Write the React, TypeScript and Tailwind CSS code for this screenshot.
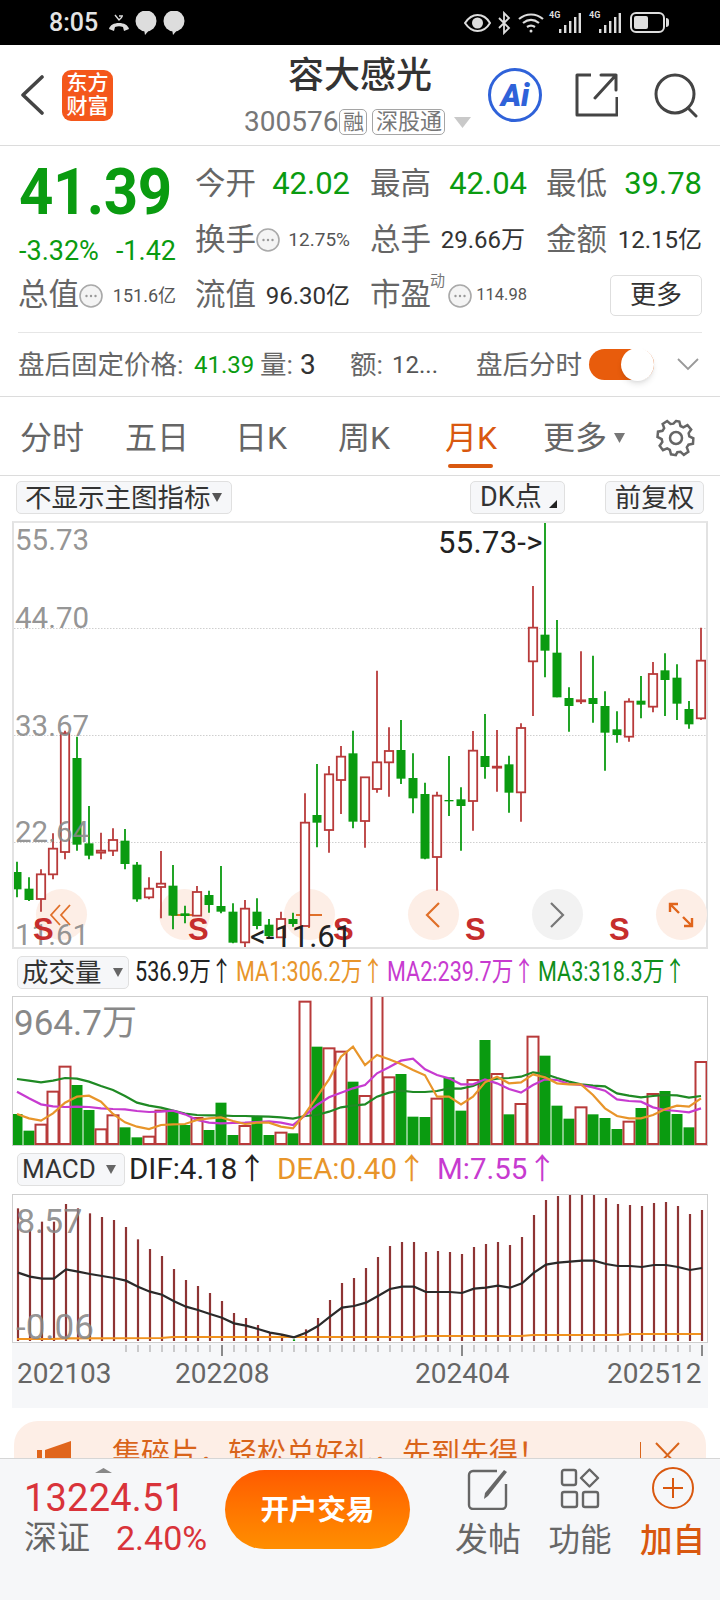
import React from 'react';

const GREEN = '#0a9b10';
const RED = '#b83a3a';

// candle data, y values measured at 3x from chart top edge (y = 520 + v / 3)
const candles: [number, number, number, number, 'r' | 'g'][] = [
  [1025, 1056, 1108, 1132, 'g'], [1072, 1106, 1140, 1143, 'g'], [1048, 1063, 1137, 1175, 'r'], [940, 986, 1063, 1078, 'r'],
  [632, 640, 996, 1018, 'r'], [650, 714, 974, 992, 'g'], [858, 970, 1007, 1018, 'g'], [938, 992, 998, 1018, 'r'],
  [925, 960, 992, 1008, 'r'], [927, 962, 1032, 1048, 'g'], [1026, 1034, 1138, 1145, 'g'], [1072, 1106, 1132, 1138, 'r'],
  [993, 1091, 1101, 1195, 'r'], [1035, 1097, 1187, 1228, 'g'], [1157, 1180, 1188, 1210, 'g'], [1098, 1116, 1187, 1187, 'r'],
  [1112, 1125, 1155, 1178, 'g'], [1038, 1158, 1175, 1180, 'g'], [1150, 1175, 1268, 1270, 'g'], [1140, 1166, 1267, 1285, 'r'],
  [1135, 1175, 1218, 1228, 'g'], [1197, 1214, 1248, 1255, 'g'], [1175, 1197, 1252, 1252, 'r'], [1178, 1197, 1212, 1220, 'g'],
  [820, 908, 1218, 1218, 'r'], [732, 885, 908, 982, 'g'], [738, 763, 930, 998, 'r'], [678, 710, 780, 882, 'r'],
  [632, 700, 905, 925, 'g'], [772, 772, 903, 983, 'r'], [452, 727, 807, 818, 'r'], [622, 693, 727, 830, 'r'],
  [600, 690, 776, 792, 'g'], [700, 774, 835, 880, 'g'], [788, 822, 1016, 1018, 'g'], [815, 827, 1011, 1112, 'r'],
  [708, 840, 844, 888, 'g'], [802, 838, 858, 992, 'g'], [633, 692, 843, 932, 'r'], [582, 708, 741, 776, 'g'],
  [630, 740, 742, 815, 'r'], [707, 733, 818, 878, 'g'], [610, 624, 817, 905, 'r'], [198, 323, 424, 588, 'r'],
  [5, 344, 392, 472, 'g'], [300, 398, 532, 532, 'g'], [502, 534, 558, 635, 'g'], [394, 541, 543, 552, 'r'],
  [407, 534, 552, 608, 'g'], [514, 558, 638, 752, 'g'], [574, 628, 645, 668, 'g'], [535, 545, 650, 665, 'r'],
  [468, 542, 554, 595, 'g'], [426, 462, 560, 577, 'r'], [400, 451, 480, 588, 'g'], [433, 473, 551, 600, 'g'],
  [543, 567, 613, 626, 'g'], [323, 422, 595, 600, 'r'],
];

// volume bars and moving averages (y = 990 + v / 3)
const volumes: [number, 'r' | 'g'][] = [
  [372, 'g'], [422, 'g'], [404, 'r'], [305, 'r'], [230, 'r'], [285, 'g'], [360, 'g'], [418, 'r'], [376, 'r'], [412, 'g'],
  [442, 'g'], [440, 'r'], [362, 'r'], [365, 'g'], [405, 'g'], [384, 'r'], [420, 'g'], [338, 'g'], [435, 'g'], [408, 'r'],
  [378, 'g'], [435, 'g'], [428, 'r'], [430, 'g'], [35, 'r'], [170, 'g'], [175, 'r'], [185, 'r'], [275, 'g'], [318, 'r'],
  [10, 'r'], [262, 'r'], [252, 'g'], [380, 'g'], [381, 'g'], [326, 'r'], [262, 'g'], [362, 'g'], [270, 'r'], [150, 'g'],
  [252, 'r'], [373, 'g'], [342, 'r'], [140, 'r'], [197, 'g'], [347, 'g'], [386, 'g'], [352, 'r'], [373, 'g'], [384, 'g'],
  [417, 'g'], [395, 'r'], [354, 'g'], [312, 'r'], [303, 'g'], [372, 'g'], [412, 'g'], [216, 'r'],
];
const ma1 = [372, 385, 392, 370, 338, 320, 317, 335, 372, 397, 410, 417, 405, 403, 402, 390, 385, 382, 393, 402, 398, 398, 410, 415, 372, 320, 268, 200, 170, 225, 195, 208, 222, 240, 256, 320, 320, 343, 320, 277, 260, 280, 277, 253, 262, 280, 283, 283, 315, 355, 378, 385, 385, 375, 358, 347, 350, 325];
const ma2 = [305, 325, 343, 349, 351, 350, 351, 355, 357, 358, 363, 366, 365, 362, 373, 390, 398, 400, 399, 398, 396, 394, 398, 405, 376, 345, 322, 308, 295, 285, 250, 232, 212, 206, 238, 255, 265, 283, 283, 268, 280, 297, 308, 285, 268, 270, 282, 285, 292, 302, 328, 333, 335, 352, 360, 363, 367, 355];
const ma3 = [267, 272, 277, 272, 264, 266, 275, 288, 300, 318, 338, 347, 353, 362, 371, 375, 376, 376, 378, 378, 379, 380, 382, 386, 378, 375, 365, 352, 347, 343, 320, 308, 302, 306, 306, 303, 295, 296, 288, 272, 266, 264, 260, 247, 252, 264, 275, 283, 287, 289, 310, 317, 322, 318, 315, 316, 323, 318];

// macd (y = 1180 + v / 3)
const hist = [85, 148, 125, 125, 72, 85, 100, 111, 120, 141, 178, 207, 228, 267, 300, 318, 339, 363, 399, 414, 435, 458, 465, 478, 448, 414, 360, 309, 294, 264, 231, 198, 186, 186, 216, 213, 216, 222, 201, 192, 186, 195, 171, 105, 60, 48, 42, 40, 40, 54, 72, 75, 78, 69, 66, 78, 102, 90];
const dif = [278, 290, 296, 296, 268, 275, 282, 288, 294, 302, 320, 335, 344, 364, 380, 390, 402, 413, 430, 437, 447, 458, 464, 472, 458, 438, 410, 383, 378, 368, 348, 327, 320, 320, 336, 336, 336, 339, 326, 323, 317, 323, 310, 278, 254, 248, 245, 242, 242, 252, 258, 258, 261, 255, 255, 261, 270, 264];
const dea: [number, number][] = [[0, 477], [3, 477], [4, 475], [12, 474], [13, 471], [33, 471], [34, 468], [42, 468], [43, 465], [50, 465], [51, 462], [57, 462]];

const cx = (i: number) => 17 + 12 * i;
const pts = (vals: number[], base: number, dx = 0) => vals.map((v, i) => `${cx(i) + dx},${base + v / 3}`).join(' ');

const Dots = () => (
  <svg width="24" height="24" viewBox="0 0 24 24" className="shrink-0">
    <circle cx="12" cy="12" r="11" fill="#f4f4f4" stroke="#a9a9a9" strokeWidth="1.600" />
    <circle cx="7.500" cy="12" r="1.200" fill="#999" />
    <circle cx="12" cy="12" r="1.200" fill="#999" />
    <circle cx="16.500" cy="12" r="1.200" fill="#999" />
  </svg>
);

const Signal = () => (
  <div className="relative w-[32px] h-[21px]">
    <span className="absolute left-0 top-[-2px] text-[9px] leading-[10px] font-bold text-[#ddd]">4G</span>
    <svg width="32" height="21" viewBox="0 0 32 21" fill="#ddd">
      <rect x="10" y="17" width="2.400" height="4" />
      <rect x="15" y="13" width="2.400" height="8" />
      <rect x="20" y="9" width="2.400" height="12" />
      <rect x="25" y="5" width="2.400" height="16" />
      <rect x="29.600" y="1" width="2.400" height="20" />
    </svg>
  </div>
);

const StatusBar = () => (
  <div className="h-[45px] bg-black flex items-center pl-[49px] text-[#e4e4e4]">
    <span className="text-[25px] font-medium leading-none w-[55px]">8:05</span>
    <svg width="24" height="20" viewBox="0 0 24 20" fill="none" stroke="#ddd" strokeWidth="2" className="ml-[3px]">
      <path d="M2 16c1-4 5-6 10-6s9 2 10 6l-5 2-1-4c-3-1-5-1-8 0l-1 4z" fill="#ddd" stroke="none" />
      <path d="M8 2l4 5 3-3M12 3h4" strokeWidth="1.400" />
    </svg>
    <svg width="22" height="24" viewBox="0 0 22 24" fill="#ddd" className="ml-[4px]">
      <circle cx="11" cy="10" r="10.500" />
      <path d="M9 18l1 6 6-7z" />
    </svg>
    <svg width="22" height="24" viewBox="0 0 22 24" fill="#ddd" className="ml-[6px]">
      <circle cx="11" cy="10" r="10.500" />
      <path d="M9 18l1 6 6-7z" />
    </svg>
    <svg width="27" height="20" viewBox="0 0 27 20" fill="none" stroke="#ddd" strokeWidth="2" className="ml-[279px]">
      <path d="M1 10c4-6 8-8 12.500-8s9 2 12.500 8c-3.500 6-8 8-12.500 8s-8.500-2-12.500-8z" />
      <circle cx="13.500" cy="10" r="4.500" fill="#ddd" />
    </svg>
    <svg width="14" height="24" viewBox="0 0 14 24" fill="none" stroke="#ddd" strokeWidth="1.800" className="ml-[6px]">
      <path d="M2 7l10 10-5 5V2l5 5L2 17" />
    </svg>
    <svg width="26" height="21" viewBox="0 0 26 21" fill="none" stroke="#ddd" strokeWidth="2.200" className="ml-[7px]">
      <path d="M1 7c7-6 17-6 24 0M5 11c5-4 11-4 16 0M9 15c3-2 5-2 8 0" />
      <circle cx="13" cy="19" r="1.500" fill="#ddd" stroke="none" />
    </svg>
    <div className="ml-[5px]"><Signal /></div>
    <div className="ml-[8px]"><Signal /></div>
    <div className="ml-[9px] w-[35px] h-[21px] rounded-[6px] border-2 border-[#ddd] p-[2px] relative">
      <div className="w-[14px] h-full rounded-[2px] bg-[#ddd]" />
      <div className="absolute right-[-6px] top-[4px] w-[3px] h-[9px] rounded-r bg-[#ddd]" />
    </div>
  </div>
);

const Header = () => (
  <div className="h-[101px] border-b border-[#dcdcdc] flex items-center pl-[20px]">
    <svg width="24" height="40" viewBox="0 0 24 40" fill="none" stroke="#444" strokeWidth="3.600" strokeLinecap="round" strokeLinejoin="round">
      <path d="M22 2L3 20l19 18" />
    </svg>
    <div className="ml-[18px] w-[51px] h-[51px] rounded-[9px] bg-[#f4571b] text-white text-[21px] font-medium leading-[23px] text-center pt-[2px]">
      <div>东方</div>
      <div>财富</div>
    </div>
    <div className="ml-[127px] w-[240px] flex flex-col items-center">
      <div className="text-[36px] leading-[46px] font-medium text-[#333] mt-[-1px] mb-[6px]">容大感光</div>
      <div className="flex items-center mt-[3px] text-[#777] w-full pl-[4px]">
        <span className="text-[28px] leading-[28px]">300576</span>
        <span className="ml-[1px] w-[28px] h-[26px] border border-[#a5a5a5] rounded-[5px] text-[21px] leading-[24px] text-center">融</span>
        <span className="ml-[5px] w-[73px] h-[26px] border border-[#a5a5a5] rounded-[5px] text-[22px] leading-[24px] text-center">深股通</span>
        <svg width="17" height="11" viewBox="0 0 17 11" fill="#c9c9c9" className="ml-[9px]"><path d="M0 0h17l-8.500 11z" /></svg>
      </div>
    </div>
    <div className="ml-[8px] w-[54px] h-[54px] rounded-full border-[3px] border-[#2f62d9] flex items-center justify-center relative">
      <span className="text-[31px] leading-none font-black italic text-[#2f62d9]">Ai</span>
    </div>
    <svg width="43" height="44" viewBox="0 0 43 44" fill="none" stroke="#444" strokeWidth="3" className="ml-[33px]">
      <path d="M16 2H2v40h40V24" strokeLinejoin="round" />
      <path d="M41 2H26M41 2v15M41 2L20 25" strokeLinecap="round" />
    </svg>
    <svg width="45" height="45" viewBox="0 0 45 45" fill="none" stroke="#444" strokeWidth="3" className="ml-[36px]" strokeLinecap="round">
      <circle cx="21" cy="21" r="19" />
      <path d="M34 35l8 8" />
    </svg>
  </div>
);

const Label = ({ children }: { children: React.ReactNode }) => (
  <span className="text-[30.500px] leading-none text-[#666] whitespace-nowrap">{children}</span>
);

const Quote = () => (
  <div className="h-[251px] border-b border-[#dcdcdc] pt-[10px]">
    <div className="grid grid-cols-[195px_175px_176px_174px] grid-rows-[56px_56px_55px]">
      <div className="row-span-2 pl-[19px] flex flex-col">
        <div className="text-[60px] leading-[60px] font-bold mt-[4px] tracking-[-0.5px] origin-top scale-y-[1.08]" style={{ color: GREEN }}>41.39</div>
        <div className="flex justify-between text-[27px] leading-none pr-[19px] mt-[18px]" style={{ color: GREEN }}>
          <span>-3.32%</span>
          <span>-1.42</span>
        </div>
      </div>
      <div className="flex items-center justify-between pr-[20px]"><Label>今开</Label><span className="text-[31px]" style={{ color: GREEN }}>42.02</span></div>
      <div className="flex items-center justify-between pr-[19px]"><Label>最高</Label><span className="text-[31px]" style={{ color: GREEN }}>42.04</span></div>
      <div className="flex items-center justify-between pr-[18px]"><Label>最低</Label><span className="text-[31px]" style={{ color: GREEN }}>39.78</span></div>
      <div className="flex items-center pr-[20px]"><Label>换手</Label><Dots /><span className="ml-auto text-[19px] text-[#555]">12.75%</span></div>
      <div className="flex items-center justify-between pr-[21px]"><Label>总手</Label><span className="text-[24px] text-[#333]">29.66万</span></div>
      <div className="flex items-center justify-between pr-[18px]"><Label>金额</Label><span className="text-[24px] text-[#333]">12.15亿</span></div>
      <div className="flex items-center pl-[18px] pr-[19px]"><Label>总值</Label><Dots /><span className="ml-auto text-[18px] text-[#555]">151.6亿</span></div>
      <div className="flex items-center justify-between pr-[20px]"><Label>流值</Label><span className="text-[24px] text-[#333]">96.30亿</span></div>
      <div className="flex items-center pr-[19px] relative">
        <Label>市盈</Label>
        <span className="absolute left-[60px] top-[6px] text-[15px] leading-none text-[#777]">动</span>
        <span className="ml-[17px]"><Dots /></span>
        <span className="ml-auto text-[16.500px] text-[#555]">114.98</span>
      </div>
      <div className="flex items-center justify-end pr-[18px]">
        <div className="w-[92px] h-[41px] border border-[#dedede] rounded-[5px] flex items-center justify-center text-[26px] text-[#333]">更多</div>
      </div>
    </div>
    <div className="mt-[9px] mx-[18px] h-px bg-[#e6e6e6]" />
    <div className="h-[63px] flex items-center pl-[18px] text-[#666]">
      <span className="text-[26.500px] w-[176px] whitespace-nowrap">盘后固定价格:</span>
      <span className="text-[24px] w-[66px]" style={{ color: GREEN }}>41.39</span>
      <span className="text-[26.500px] w-[40px] whitespace-nowrap">量:</span>
      <span className="text-[28px] w-[50px] text-[#333]">3</span>
      <span className="text-[26.500px] w-[42px] whitespace-nowrap">额:</span>
      <span className="text-[24px] w-[84px] text-[#555]">12...</span>
      <span className="text-[26.500px] w-[113px] whitespace-nowrap">盘后分时</span>
      <div className="w-[65px] h-[31px] rounded-full bg-[#e85c0c] relative">
        <div className="absolute right-0 top-[-1px] w-[33px] h-[33px] rounded-full bg-white shadow-md" />
      </div>
      <svg width="22" height="13" viewBox="0 0 22 13" fill="none" stroke="#999" strokeWidth="1.800" className="ml-[23px]"><path d="M1 1l10 10L21 1" /></svg>
    </div>
  </div>
);

const tabs = [
  { name: '分时', cls: 'w-[62px]' },
  { name: '五日', cls: 'ml-[43px] w-[62px]' },
  { name: '日K', cls: 'ml-[48px] w-[55px]' },
  { name: '周K', cls: 'ml-[48px] w-[56px]' },
];

const Tabs = () => (
  <div className="h-[79px] border-b border-[#dcdcdc] flex items-center pl-[20px] pt-[3px] text-[32px] text-[#666]">
    {tabs.map(t => (
      <span key={t.name} className={`${t.cls} whitespace-nowrap`}>{t.name}</span>
    ))}
    <span className="ml-[51px] w-[55px] whitespace-nowrap text-[#d9580f] relative">
      月K
      <span className="absolute left-[3px] bottom-[-6px] w-[45px] h-[4px] rounded-full bg-[#d9580f]" />
    </span>
    <span className="ml-[43px] whitespace-nowrap">更多</span>
    <svg width="11" height="10" viewBox="0 0 11 10" fill="#777" className="ml-[7px]"><path d="M0 0h11L5.500 10z" /></svg>
    <svg width="40" height="40" viewBox="0 0 24 24" fill="none" stroke="#666" strokeWidth="1.500" className="ml-[31px]">
      <path d="M12 2l2 .3.700 2.700 1.700.8 2.500-1.300 2.200 2.600-1.500 2.200.4 1.900 2.400 1.200-.2 3.200-2.700.6-1 1.600.9 2.600-2.700 1.900-2-1.800-1.900.2L11.900 22.500l-2.900-.5-.7-2.700-1.600-.9-2.500 1.100-2-2.700 1.600-2.200-.4-1.800L.9 11.600l.3-3.200 2.700-.5 1-1.600L4 3.800l2.700-1.800 2 1.800 1.800-.2z" transform="translate(0 -.2)" />
      <circle cx="12" cy="12" r="3.600" />
    </svg>
  </div>
);

const ToolButton = ({ className, children }: { className: string; children: React.ReactNode }) => (
  <div className={`h-[33px] bg-[#f6f7f9] border border-[#e0e0e0] rounded-[5px] flex items-center text-[#333] ${className}`}>{children}</div>
);

const Toolbar = () => (
  <div className="h-[45px] pt-[5px] pl-[16px] flex items-start">
    <ToolButton className="w-[216px] pl-[8px] text-[26.500px]">
      <span className="whitespace-nowrap">不显示主图指标</span>
      <svg width="10" height="9" viewBox="0 0 10 9" fill="#555" className="ml-[1px]"><path d="M0 0h10L5 9z" /></svg>
    </ToolButton>
    <ToolButton className="ml-[238px] w-[95px] pl-[9px] text-[27px] relative">
      DK点
      <svg width="8" height="8" viewBox="0 0 8 8" fill="#222" className="absolute right-[7px] bottom-[5px]"><path d="M8 0v8H0z" /></svg>
    </ToolButton>
    <ToolButton className="ml-[40px] w-[99px] justify-center text-[26.500px]">前复权</ToolButton>
  </div>
);

const axisLabel = 'absolute left-[1px] text-[29.500px] leading-none text-[#888]/90';

const OverlayBtn = ({ x, gray, children }: { x: number; gray?: boolean; children: React.ReactNode }) => (
  <div
    className={`absolute top-[366px] w-[51px] h-[51px] rounded-full flex items-center justify-center ${gray ? 'bg-[#f2f2f2]' : 'bg-[#fdeee6]'}`}
    style={{ left: x - 39.500 }}
  >
    {children}
  </div>
);

const SMark = ({ x }: { x: number }) => (
  <span className="absolute top-[391px] text-[31px] leading-none font-bold text-[#c62d2d] font-['Liberation_Sans',sans-serif]" style={{ left: x - 24 }}>S</span>
);

const KChart = () => (
  <div className="relative ml-[12px] w-[696px] h-[428px] border-2 border-[#e2e2e2] border-t-[#e6e6e6]">
    <OverlayBtn x={61}>
      <svg width="24" height="24" viewBox="0 0 24 24" fill="none" stroke="#e0702a" strokeWidth="1.800"><path d="M11 2L2 12l9 10M21 2l-9 10 9 10" /></svg>
    </OverlayBtn>
    <OverlayBtn x={184}>
      <svg width="26" height="4" viewBox="0 0 26 4" stroke="#e0702a" strokeWidth="2"><path d="M0 2h26" /></svg>
    </OverlayBtn>
    <OverlayBtn x={309}>
      <svg width="26" height="26" viewBox="0 0 26 26" stroke="#e0702a" strokeWidth="2"><path d="M0 13h26M13 0v26" /></svg>
    </OverlayBtn>
    <OverlayBtn x={433}>
      <svg width="16" height="26" viewBox="0 0 16 26" fill="none" stroke="#e0702a" strokeWidth="2.200"><path d="M14 1L2 13l12 12" /></svg>
    </OverlayBtn>
    <OverlayBtn x={557} gray>
      <svg width="16" height="26" viewBox="0 0 16 26" fill="none" stroke="#777" strokeWidth="2.200"><path d="M2 1l12 12L2 25" /></svg>
    </OverlayBtn>
    <OverlayBtn x={681}>
      <svg width="26" height="26" viewBox="0 0 26 26" fill="none" stroke="#e0651c" strokeWidth="2.400"><path d="M2 10V2h8M2 2l9 9M24 16v8h-8M24 24l-9-9" /></svg>
    </OverlayBtn>
    <svg viewBox="14 523 692 424" width="692" height="424" className="absolute left-0 top-0">
      {[628.500, 735.500, 842.500].map(y => (
        <line key={y} x1="14" x2="706" y1={y} y2={y} stroke="#cfcfcf" strokeWidth="1" strokeDasharray="1.500 1.500" />
      ))}
      {candles.map(([hi, top, bot, lo, c], i) => {
        const x = cx(i);
        const col = c === 'r' ? RED : GREEN;
        const t = 520 + top / 3;
        const b = 520 + bot / 3;
        return (
          <g key={i}>
            <line x1={x} x2={x} y1={520 + hi / 3} y2={520 + lo / 3} stroke={col} strokeWidth="1.800" />
            {c === 'r'
              ? <rect x={x - 4.200} y={t} width="8.400" height={Math.max(b - t, 1)} fill="#fff" stroke={col} strokeWidth="1.800" />
              : <rect x={x - 4.500} y={t} width="9" height={b - t} fill={col} />}
          </g>
        );
      })}
    </svg>
    <span className={`${axisLabel} top-[3px]`}>55.73</span>
    <span className={`${axisLabel} top-[81px]`}>44.70</span>
    <span className={`${axisLabel} top-[189px]`}>33.67</span>
    <span className={`${axisLabel} top-[295px]`}>22.64</span>
    <span className={`${axisLabel} top-[398px]`}>11.61</span>
    <span className="absolute left-[424px] top-[4px] text-[31px] leading-none text-[#222] whitespace-nowrap tracking-[0.3px]">55.73-&gt;</span>
    <SMark x={43} />
    <SMark x={198} />
    <SMark x={343} />
    <SMark x={475} />
    <SMark x={619} />
    <span className="absolute left-[236px] top-[398px] text-[31px] leading-none text-[#222] whitespace-nowrap">&lt;-11.61</span>
  </div>
);

const Squeeze = ({ className, children }: { className: string; children: React.ReactNode }) => (
  <span className={`inline-block origin-left scale-x-[0.8] whitespace-nowrap ${className}`}>{children}</span>
);

const VolHeader = () => (
  <div className="h-[47px] pt-[7px] pl-[17px] flex items-start">
    <ToolButton className="w-[112px] pl-[4px] text-[26.500px]">
      <span className="whitespace-nowrap">成交量</span>
      <svg width="10" height="9" viewBox="0 0 10 9" fill="#666" className="ml-[11px]"><path d="M0 0h10L5 9z" /></svg>
    </ToolButton>
    <div className="relative flex-1 h-[33px] text-[27px] leading-[33px]">
      <span className="absolute left-[6px]"><Squeeze className="text-[#222]">536.9万↑</Squeeze></span>
      <span className="absolute left-[107px]"><Squeeze className="text-[#e8952a]">MA1:306.2万↑</Squeeze></span>
      <span className="absolute left-[258px]"><Squeeze className="text-[#c73bd0]">MA2:239.7万↑</Squeeze></span>
      <span className="absolute left-[409px]"><Squeeze className="text-[#0f8f1a]">MA3:318.3万↑</Squeeze></span>
    </div>
  </div>
);

const VolChart = () => (
  <div className="relative ml-[12px] w-[696px] h-[150px] border border-[#cfcfcf]">
    <svg viewBox="13 997 694 148" width="694" height="148" className="absolute left-0 top-0">
      {volumes.map(([v, c], i) => {
        const x = cx(i);
        const t = 990 + v / 3;
        return c === 'r'
          ? <rect key={i} x={x - 5.500} y={t} width="11" height={1144 - t} fill="#fff" stroke={RED} strokeWidth="2" />
          : <rect key={i} x={x - 5.500} y={t} width="11" height={1145 - t} fill={GREEN} />;
      })}
      <polyline points={pts(ma3, 990)} fill="none" stroke="#1f8a24" strokeWidth="2.200" />
      <polyline points={pts(ma2, 990)} fill="none" stroke="#c73bd0" strokeWidth="2.200" />
      <polyline points={pts(ma1, 990)} fill="none" stroke="#e8952a" strokeWidth="2.200" />
    </svg>
    <span className="absolute left-[1px] top-[9px] text-[35px] leading-none text-[#888] whitespace-nowrap">964.7万</span>
  </div>
);

const MacdHeader = () => (
  <div className="h-[48px] pt-[7px] pl-[17px] flex items-start">
    <ToolButton className="w-[108px] pl-[4px] text-[26px]">
      <span>MACD</span>
      <svg width="10" height="9" viewBox="0 0 10 9" fill="#666" className="ml-[10px]"><path d="M0 0h10L5 9z" /></svg>
    </ToolButton>
    <div className="relative flex-1 h-[33px] text-[29.500px] leading-[33px] whitespace-nowrap">
      <span className="absolute left-[4px] text-[#222]">DIF:4.18↑</span>
      <span className="absolute left-[152px] text-[#e8952a]">DEA:0.40↑</span>
      <span className="absolute left-[312px] text-[#c73bd0]">M:7.55↑</span>
    </div>
  </div>
);

const MacdChart = () => (
  <div className="relative ml-[12px] w-[696px] h-[149px] border border-[#cfcfcf]">
    <svg viewBox="13 1195 694 147" width="694" height="147" className="absolute left-0 top-0">
      {hist.map((v, i) => (
        <line key={i} x1={cx(i) + 1} x2={cx(i) + 1} y1={1180 + v / 3} y2={1341} stroke={i === 23 ? GREEN : '#8e3434'} strokeWidth="2.200" />
      ))}
      <polyline points={dea.map(([i, v]) => `${cx(i)},${1180 + v / 3}`).join(' ')} fill="none" stroke="#f0921e" strokeWidth="2.200" />
      <polyline points={pts(dif, 1180, 1)} fill="none" stroke="#2a2a2a" strokeWidth="2.200" />
    </svg>
    <span className="absolute left-[3px] top-[9px] text-[34px] leading-none text-[#888]/90">8.57</span>
    <span className="absolute left-[3px] top-[115px] text-[35px] leading-none text-[#888]/90">-0.06</span>
  </div>
);

const Axis = () => (
  <div className="relative ml-[12px] w-[696px] h-[65px] bg-[#f6f7f9]">
    <svg viewBox="12 1343 696 16" width="696" height="16" className="block">
      {candles.map((_, i) => {
        const major = i === 17 || i === 37 || i === 57;
        if (i < 9 && !major) return null;
        return <line key={i} x1={cx(i) + 1} x2={cx(i) + 1} y1="1345" y2={major ? 1356 : 1352} stroke={major ? '#666' : '#bbb'} strokeWidth="1.500" />;
      })}
    </svg>
    <div className="relative h-[30px] text-[28px] leading-[30px] text-[#666]">
      <span className="absolute left-[5px] top-[0px]">202103</span>
      <span className="absolute left-[163px] top-[0px]">202208</span>
      <span className="absolute left-[403px] top-[0px]">202404</span>
      <span className="absolute left-[595px] top-[0px]">202512</span>
    </div>
  </div>
);

const Banner = () => (
  <div className="mt-[13px] mx-[14px] h-[60px] rounded-t-[24px] bg-[#fdeee6] flex items-start pt-[19px] pl-[23px] text-[#d9641a] relative">
    <svg width="34" height="30" viewBox="0 0 34 30" fill="#e0651c"><path d="M0 10h5v20H0zM8 10l26-9v29H8z" /></svg>
    <span className="ml-[41px] text-[29px] leading-[28px] whitespace-nowrap">集碎片，轻松兑好礼，先到先得！</span>
    <span className="absolute left-[626px] top-[21px] w-px h-[24px] bg-[#d9641a]" />
    <svg width="25" height="26" viewBox="0 0 25 26" fill="none" stroke="#d9641a" strokeWidth="2" className="absolute left-[641px] top-[21px]"><path d="M1 1l23 24M24 1L1 25" /></svg>
  </div>
);

const BottomBar = () => (
  <div className="h-[142px] shrink-0 bg-[#f6f7f9] border-t border-[#d6d6d6] relative flex items-start">
    <svg width="17" height="5" viewBox="0 0 17 5" fill="#888" className="absolute left-[95px] top-[9px]"><path d="M8.500 0L17 5H0z" /></svg>
    <div className="ml-[24px] w-[201px] pt-[20px] shrink-0">
      <div className="text-[38px] leading-[38px] text-[#d9333a] tracking-[0.2px]">13224.51</div>
      <div className="flex items-center mt-[3px]">
        <span className="text-[33px] leading-[36px] text-[#666] w-[92px]">深证</span>
        <span className="text-[34px] leading-[36px] text-[#d9333a]">2.40%</span>
      </div>
    </div>
    <div className="mt-[11px] w-[185px] h-[79px] rounded-full bg-gradient-to-b from-[#ff5a00] to-[#ff8e00] flex items-center justify-center pt-[3px] text-white font-bold text-[28.500px]">开户交易</div>
    <div className="ml-[44px] w-[68px] pt-[9px] flex flex-col items-center text-[#666]">
      <svg width="43" height="42" viewBox="0 0 43 42" fill="none" stroke="#666" strokeWidth="2.400">
        <path d="M30 3H6a4 4 0 0 0-4 4v30a4 4 0 0 0 4 4h29a4 4 0 0 0 4-4V16" />
        <path d="M18 25L37 2l3 2-19 24-4 3z" fill="#666" stroke="none" />
      </svg>
      <span className="text-[33px] leading-[36px] mt-[12px] whitespace-nowrap">发帖</span>
    </div>
    <div className="ml-[26px] w-[64px] pt-[9px] flex flex-col items-center text-[#666]">
      <svg width="40" height="41" viewBox="0 0 40 41" fill="none" stroke="#666" strokeWidth="2.400">
        <rect x="2" y="2" width="14" height="15" rx="2" />
        <path d="M29.500 1.500L38 10l-8.500 8.500L21 10z" strokeLinejoin="round" />
        <rect x="2" y="24" width="15" height="15" rx="2" />
        <rect x="23" y="24" width="15" height="15" rx="2" />
      </svg>
      <span className="text-[31.500px] leading-[36px] mt-[14px] whitespace-nowrap">功能</span>
    </div>
    <div className="ml-[28px] w-[65px] pt-[8px] flex flex-col items-center text-[#d9580f]">
      <svg width="42" height="42" viewBox="0 0 42 42" fill="none" stroke="#d9580f" strokeWidth="2">
        <circle cx="21" cy="21" r="20" />
        <path d="M21 11v20M11 21h20" />
      </svg>
      <span className="text-[32.500px] font-medium leading-[36px] mt-[14px] whitespace-nowrap">加自</span>
    </div>
  </div>
);

export default function App() {
  return (
    <div className="w-[720px] h-[1600px] bg-white flex flex-col overflow-hidden font-['Roboto','Noto_Sans_CJK_SC',sans-serif]">
      <div className="flex-1 overflow-hidden">
        <StatusBar />
        <Header />
        <Quote />
        <Tabs />
        <Toolbar />
        <KChart />
        <VolHeader />
        <VolChart />
        <MacdHeader />
        <MacdChart />
        <Axis />
        <Banner />
      </div>
      <BottomBar />
    </div>
  );
}
